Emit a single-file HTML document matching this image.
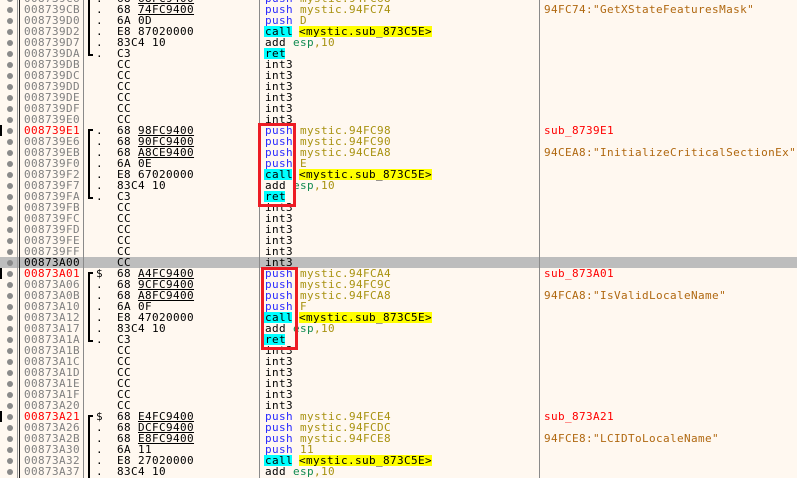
<!DOCTYPE html>
<html><head><meta charset="utf-8"><style>
html,body{margin:0;padding:0}
#p{position:relative;width:797px;height:478px;overflow:hidden;background:#fff8f0;font:11px/11px "DejaVu Sans Mono","Liberation Mono",monospace;letter-spacing:.38px;color:#000}
.r{position:absolute;left:0;width:797px;height:11px;white-space:pre}
.r span,.r i,.r b,.r u{position:absolute;top:0;font-style:normal;font-weight:normal;height:11px}
.d{left:7px;top:3px!important;width:6px;height:6px!important;border-radius:50%;background:#8a8a8a}
.a{left:24px;color:#808080}
.L .a{color:#f00}
.c .a{color:#000}
.m{left:96px}
.o{left:117px}
.u{left:138px;text-decoration:underline;text-underline-offset:1px}
.t{left:265px}
.b{color:#2a2aff}
.h{background:#0ff;left:264px;padding-left:1px;width:27px;overflow:hidden}
.h.w{width:20px}
.v{left:300px;color:#a89210}
.y{left:299px;width:133px;background:#ff0;color:#000}
.g{left:300px;color:#a89210}
.g em{font-style:normal;color:#108a50}
.k{left:544px;color:#b06810}
.s{left:544px;color:#f00}
.c{background:#bdbdbd}
.l{position:absolute;top:0;height:478px;width:1px}
.x{position:absolute;background:#000}
.q{position:absolute;border:3px solid #ed1c24;box-sizing:border-box}
</style></head><body><div id="p">
<div class="r c" style="top:257px"></div>
<div class="l" style="left:17px;background:#9a9a9a"></div>
<div class="l" style="left:19px;background:#222"></div>
<div class="l" style="left:83px;background:#8a8a8a"></div>
<div class="l" style="left:259px;background:#8a8a8a"></div>
<div class="l" style="left:539px;background:#8a8a8a"></div>
<div class="x" style="left:88px;top:0;width:2px;height:55px"></div><div class="x" style="left:88px;top:54px;width:5px;height:2px"></div>
<div class="x" style="left:88px;top:129px;width:2px;height:69px"></div><div class="x" style="left:88px;top:129px;width:5px;height:2px"></div><div class="x" style="left:88px;top:197px;width:5px;height:2px"></div>
<div class="x" style="left:88px;top:272px;width:2px;height:69px"></div><div class="x" style="left:88px;top:272px;width:5px;height:2px"></div><div class="x" style="left:88px;top:340px;width:5px;height:2px"></div>
<div class="x" style="left:88px;top:415px;width:2px;height:63px"></div><div class="x" style="left:88px;top:415px;width:5px;height:2px"></div>
<div class="x" style="left:0;top:125px;width:2px;height:11px"></div>
<div class="x" style="left:0;top:268px;width:2px;height:11px"></div>
<div class="x" style="left:0;top:411px;width:2px;height:11px"></div>
<div class="r" style="top:-7px"><i class="d"></i><span class="a">008739C6</span><span class="m">.</span><span class="o">68</span><span class="u">68FC9400</span><span class="t b">push</span><span class="v">mystic.94FC68</span></div>
<div class="r" style="top:4px"><i class="d"></i><span class="a">008739CB</span><span class="m">.</span><span class="o">68</span><span class="u">74FC9400</span><span class="t b">push</span><span class="v">mystic.94FC74</span><span class="k">94FC74:"GetXStateFeaturesMask"</span></div>
<div class="r" style="top:15px"><i class="d"></i><span class="a">008739D0</span><span class="m">.</span><span class="o">6A 0D</span><span class="t b">push</span><span class="v">D</span></div>
<div class="r" style="top:26px"><i class="d"></i><span class="a">008739D2</span><span class="m">.</span><span class="o">E8 87020000</span><span class="t h">call</span><span class="y">&lt;mystic.sub_873C5E&gt;</span></div>
<div class="r" style="top:37px"><i class="d"></i><span class="a">008739D7</span><span class="m">.</span><span class="o">83C4 10</span><span class="t">add</span><span class="g" style="left:293px"><em>esp</em>,10</span></div>
<div class="r" style="top:48px"><i class="d"></i><span class="a">008739DA</span><span class="m">.</span><span class="o">C3</span><span class="t h w">ret</span></div>
<div class="r" style="top:59px"><i class="d"></i><span class="a">008739DB</span><span class="o">CC</span><span class="t">int3</span></div>
<div class="r" style="top:70px"><i class="d"></i><span class="a">008739DC</span><span class="o">CC</span><span class="t">int3</span></div>
<div class="r" style="top:81px"><i class="d"></i><span class="a">008739DD</span><span class="o">CC</span><span class="t">int3</span></div>
<div class="r" style="top:92px"><i class="d"></i><span class="a">008739DE</span><span class="o">CC</span><span class="t">int3</span></div>
<div class="r" style="top:103px"><i class="d"></i><span class="a">008739DF</span><span class="o">CC</span><span class="t">int3</span></div>
<div class="r" style="top:114px"><i class="d"></i><span class="a">008739E0</span><span class="o">CC</span><span class="t">int3</span></div>
<div class="r L" style="top:125px"><i class="d"></i><span class="a">008739E1</span><span class="m">.</span><span class="o">68</span><span class="u">98FC9400</span><span class="t b">push</span><span class="v">mystic.94FC98</span><span class="s">sub_8739E1</span></div>
<div class="r" style="top:136px"><i class="d"></i><span class="a">008739E6</span><span class="m">.</span><span class="o">68</span><span class="u">90FC9400</span><span class="t b">push</span><span class="v">mystic.94FC90</span></div>
<div class="r" style="top:147px"><i class="d"></i><span class="a">008739EB</span><span class="m">.</span><span class="o">68</span><span class="u">A8CE9400</span><span class="t b">push</span><span class="v">mystic.94CEA8</span><span class="k">94CEA8:"InitializeCriticalSectionEx"</span></div>
<div class="r" style="top:158px"><i class="d"></i><span class="a">008739F0</span><span class="m">.</span><span class="o">6A 0E</span><span class="t b">push</span><span class="v">E</span></div>
<div class="r" style="top:169px"><i class="d"></i><span class="a">008739F2</span><span class="m">.</span><span class="o">E8 67020000</span><span class="t h">call</span><span class="y">&lt;mystic.sub_873C5E&gt;</span></div>
<div class="r" style="top:180px"><i class="d"></i><span class="a">008739F7</span><span class="m">.</span><span class="o">83C4 10</span><span class="t">add</span><span class="g" style="left:293px"><em>esp</em>,10</span></div>
<div class="r" style="top:191px"><i class="d"></i><span class="a">008739FA</span><span class="m">.</span><span class="o">C3</span><span class="t h w">ret</span></div>
<div class="r" style="top:202px"><i class="d"></i><span class="a">008739FB</span><span class="o">CC</span><span class="t">int3</span></div>
<div class="r" style="top:213px"><i class="d"></i><span class="a">008739FC</span><span class="o">CC</span><span class="t">int3</span></div>
<div class="r" style="top:224px"><i class="d"></i><span class="a">008739FD</span><span class="o">CC</span><span class="t">int3</span></div>
<div class="r" style="top:235px"><i class="d"></i><span class="a">008739FE</span><span class="o">CC</span><span class="t">int3</span></div>
<div class="r" style="top:246px"><i class="d"></i><span class="a">008739FF</span><span class="o">CC</span><span class="t">int3</span></div>
<div class="r" style="top:257px"><i class="d"></i><span class="a" style="color:#000">00873A00</span><span class="o">CC</span><span class="t">int3</span></div>
<div class="r L" style="top:268px"><i class="d"></i><span class="a">00873A01</span><span class="m">$</span><span class="o">68</span><span class="u">A4FC9400</span><span class="t b">push</span><span class="v">mystic.94FCA4</span><span class="s">sub_873A01</span></div>
<div class="r" style="top:279px"><i class="d"></i><span class="a">00873A06</span><span class="m">.</span><span class="o">68</span><span class="u">9CFC9400</span><span class="t b">push</span><span class="v">mystic.94FC9C</span></div>
<div class="r" style="top:290px"><i class="d"></i><span class="a">00873A0B</span><span class="m">.</span><span class="o">68</span><span class="u">A8FC9400</span><span class="t b">push</span><span class="v">mystic.94FCA8</span><span class="k">94FCA8:"IsValidLocaleName"</span></div>
<div class="r" style="top:301px"><i class="d"></i><span class="a">00873A10</span><span class="m">.</span><span class="o">6A 0F</span><span class="t b">push</span><span class="v">F</span></div>
<div class="r" style="top:312px"><i class="d"></i><span class="a">00873A12</span><span class="m">.</span><span class="o">E8 47020000</span><span class="t h">call</span><span class="y">&lt;mystic.sub_873C5E&gt;</span></div>
<div class="r" style="top:323px"><i class="d"></i><span class="a">00873A17</span><span class="m">.</span><span class="o">83C4 10</span><span class="t">add</span><span class="g" style="left:293px"><em>esp</em>,10</span></div>
<div class="r" style="top:334px"><i class="d"></i><span class="a">00873A1A</span><span class="m">.</span><span class="o">C3</span><span class="t h w">ret</span></div>
<div class="r" style="top:345px"><i class="d"></i><span class="a">00873A1B</span><span class="o">CC</span><span class="t">int3</span></div>
<div class="r" style="top:356px"><i class="d"></i><span class="a">00873A1C</span><span class="o">CC</span><span class="t">int3</span></div>
<div class="r" style="top:367px"><i class="d"></i><span class="a">00873A1D</span><span class="o">CC</span><span class="t">int3</span></div>
<div class="r" style="top:378px"><i class="d"></i><span class="a">00873A1E</span><span class="o">CC</span><span class="t">int3</span></div>
<div class="r" style="top:389px"><i class="d"></i><span class="a">00873A1F</span><span class="o">CC</span><span class="t">int3</span></div>
<div class="r" style="top:400px"><i class="d"></i><span class="a">00873A20</span><span class="o">CC</span><span class="t">int3</span></div>
<div class="r L" style="top:411px"><i class="d"></i><span class="a">00873A21</span><span class="m">$</span><span class="o">68</span><span class="u">E4FC9400</span><span class="t b">push</span><span class="v">mystic.94FCE4</span><span class="s">sub_873A21</span></div>
<div class="r" style="top:422px"><i class="d"></i><span class="a">00873A26</span><span class="m">.</span><span class="o">68</span><span class="u">DCFC9400</span><span class="t b">push</span><span class="v">mystic.94FCDC</span></div>
<div class="r" style="top:433px"><i class="d"></i><span class="a">00873A2B</span><span class="m">.</span><span class="o">68</span><span class="u">E8FC9400</span><span class="t b">push</span><span class="v">mystic.94FCE8</span><span class="k">94FCE8:"LCIDToLocaleName"</span></div>
<div class="r" style="top:444px"><i class="d"></i><span class="a">00873A30</span><span class="m">.</span><span class="o">6A 11</span><span class="t b">push</span><span class="v">11</span></div>
<div class="r" style="top:455px"><i class="d"></i><span class="a">00873A32</span><span class="m">.</span><span class="o">E8 27020000</span><span class="t h">call</span><span class="y">&lt;mystic.sub_873C5E&gt;</span></div>
<div class="r" style="top:466px"><i class="d"></i><span class="a">00873A37</span><span class="m">.</span><span class="o">83C4 10</span><span class="t">add</span><span class="g" style="left:293px"><em>esp</em>,10</span></div>
<div class="q" style="left:258px;top:123px;width:38px;height:84px"></div>
<div class="q" style="left:261px;top:267px;width:37px;height:83px"></div>
</div></body></html>
